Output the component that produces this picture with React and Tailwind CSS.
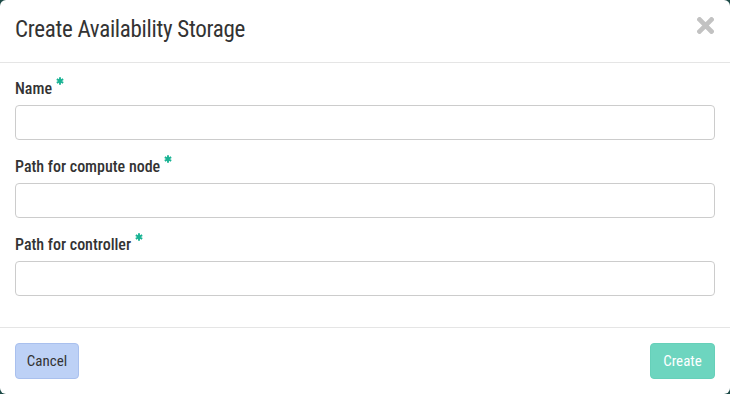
function Star() {
  return (
    <svg className="ml-[4px] -mt-[4px]" width="8" height="8" viewBox="0 0 8 8">
      <path d="M4 0.3 L4 7.7 M0.8 2.15 L7.2 5.85 M0.8 5.85 L7.2 2.15" stroke="#1ab394" strokeWidth="1.9" />
    </svg>
  );
}

function Field({ label, last }) {
  return (
    <div className={last ? '' : 'mb-[16px]'}>
      <div className="h-[27px] flex items-start pt-[3px]">
        <span className="text-[16px] leading-[16px] font-medium text-[#333333]">{label}</span>
        <Star />
      </div>
      <input
        type="text"
        className="block w-full h-[35px] rounded-[4px] border border-[#cccccc] bg-white px-3 outline-none"
      />
    </div>
  );
}

export default function App() {
  return (
    <div className="w-[730px] h-[394px] bg-[#1d4a47] font-['Roboto_Condensed','Roboto',sans-serif]">
      <div className="w-full h-full bg-white rounded-[6px] flex flex-col overflow-hidden">
        <div className="h-[63px] border-b border-[#e5e5e5] flex items-start justify-between pl-[15px] pr-[16px]">
          <h4 className="mt-[18px] text-[23px] leading-[23px] tracking-[-0.3px] font-normal text-[#333333]">Create Availability Storage</h4>
          <svg className="mt-[17px]" width="17" height="17" viewBox="0 0 17 17">
            <path d="M2.5 2.5 L14.5 14.5 M14.5 2.5 L2.5 14.5" stroke="#c2c2c2" strokeWidth="4.6" strokeLinecap="square" />
          </svg>
        </div>
        <div className="px-[15px] pt-[15px] pb-[31px] border-b border-[#e5e5e5]">
          <Field label="Name" />
          <Field label="Path for compute node" />
          <Field label="Path for controller" last />
        </div>
        <div className="flex-1 flex items-center justify-between px-[15px]">
          <button className="h-[36px] w-[64px] rounded-[4px] bg-[#bdd1f6] border border-[#a9c0ee] text-[#333333] text-[15px] leading-none">Cancel</button>
          <button className="h-[36px] w-[65px] rounded-[4px] bg-[#6dd5bf] border border-[#66d0b9] text-white text-[15px] leading-none">Create</button>
        </div>
      </div>
    </div>
  );
}
